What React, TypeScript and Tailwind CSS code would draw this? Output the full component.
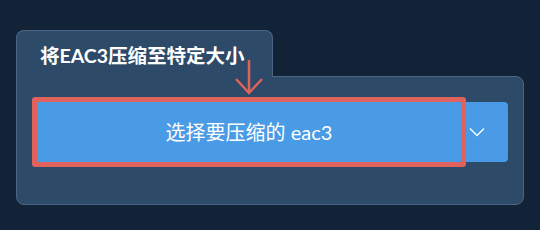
import React from 'react';

const FONT = "font-['Lato','Noto_Sans_CJK_SC',sans-serif]";

export default function App() {
  return (
    <div className={`relative w-[540px] h-[230px] bg-[#122338] px-4 pt-[30px] ${FONT}`}>
      {/* Tab header */}
      <div className="relative z-10 -mb-px flex h-[47px] w-[257px] items-center rounded-t-lg border border-b-0 border-[#4b6685] bg-[#2d4a69] pl-[23px] pt-[3px]">
        <span className="text-[19.5px] font-bold leading-none text-white">将EAC3压缩至特定大小</span>
      </div>

      {/* Panel body */}
      <div className="h-[129px] rounded-b-lg rounded-tr-lg border border-[#4b6685] bg-[#2d4a69] px-[15px] pt-[25px]">
        <div className="flex h-[60px] items-center">
          <button className="-my-[5px] flex h-[70px] flex-1 items-center justify-center rounded-[3px] border-[5px] border-[#e0625c] bg-[#4a9be6] text-[20px] text-white">
            选择要压缩的 eac3
          </button>
          <button className="flex h-[60px] w-[42px] items-center rounded-r-[4px] bg-[#4a9be6] pl-[3px]">
            <svg width="16" height="10" viewBox="0 0 16 10" fill="none">
              <polyline points="1,1.5 8,8.5 15,1.5" stroke="white" strokeWidth="1.3" />
            </svg>
          </button>
        </div>
      </div>

      {/* Annotation arrow */}
      <svg className="absolute left-[233px] top-[57px] z-20" width="32" height="40" viewBox="0 0 32 40" fill="none">
        <line x1="16" y1="3" x2="16" y2="36" stroke="#e0625c" strokeWidth="2.5" />
        <polyline points="3,22 16,36 29,22" stroke="#e0625c" strokeWidth="2.5" />
      </svg>
    </div>
  );
}
